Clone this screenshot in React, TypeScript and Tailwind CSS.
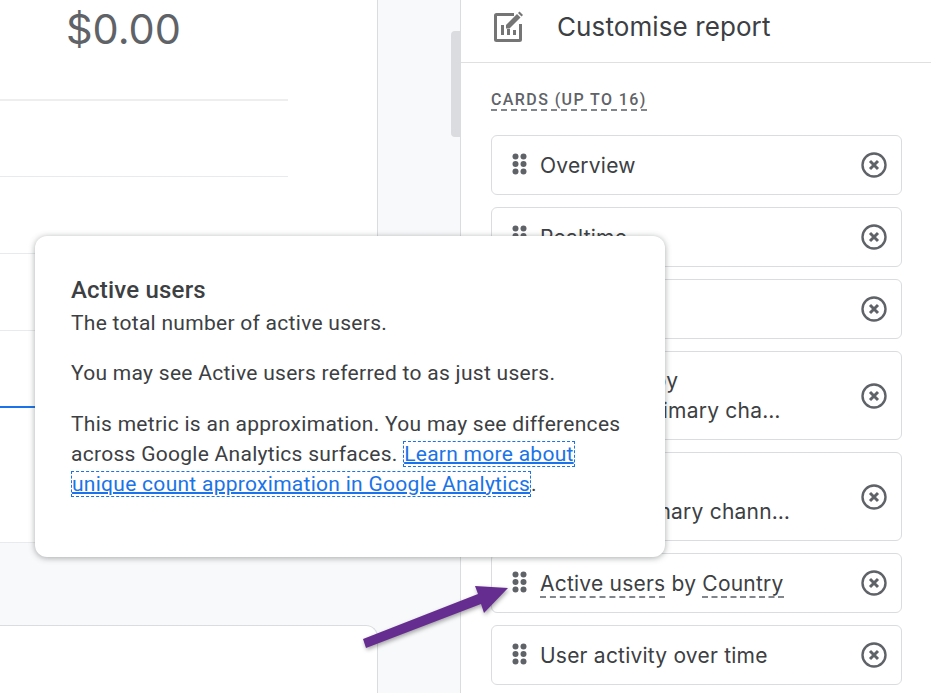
const cards = [
  { lines: ["Overview"] },
  { lines: ["Realtime"] },
  { lines: ["Insights"] },
  { lines: ["New users by", "First user primary cha…"], tall: true },
  { lines: ["Sessions by", "Session primary chann…"], tall: true },
  { lines: [], country: true },
  { lines: ["User activity over time"] },
];

function DragDots() {
  return (
    <svg width="16" height="22" viewBox="0 0 16 22" className="shrink-0 fill-[#5f6368]">
      <circle cx="3.5" cy="3.500" r="3" />
      <circle cx="11.5" cy="3.500" r="3" />
      <circle cx="3.5" cy="11" r="3" />
      <circle cx="11.5" cy="11" r="3" />
      <circle cx="3.5" cy="18.5" r="3" />
      <circle cx="11.5" cy="18.5" r="3" />
    </svg>
  );
}

function RemoveIcon() {
  return (
    <svg width="26" height="26" viewBox="0 0 26 26" fill="none" className="shrink-0 stroke-[#5f6368]">
      <circle cx="13" cy="13" r="11.5" strokeWidth="2.4" />
      <path d="M9 9l8 8M17 9l-8 8" strokeWidth="3" />
    </svg>
  );
}

function EditChartIcon() {
  return (
    <svg width="32" height="32" viewBox="0 0 32 32" fill="none" className="shrink-0">
      <path d="M21 3.5H3.5a1 1 0 0 0-1 1v24a1 1 0 0 0 1 1h23a1 1 0 0 0 1-1V13" stroke="#757575" strokeWidth="3" />
      <path d="M13 14l11-11 3.5 3.5-11 11H13z" fill="#757575" />
      <path d="M25 2l1.5-1.5 3.5 3.5L28.5 5.500z" fill="#757575" />
      <path d="M8 14h3v10H8zM14 18h3v6h-3zM20 19h3v5h-3z" fill="#757575" />
    </svg>
  );
}

function CardRow({ card }: { card: (typeof cards)[number] }) {
  const textClass = "pt-[1px] font-['Inter',sans-serif] text-[21px] leading-[30px] tracking-[0.22px] text-[#3c4043]";
  return (
    <div
      className={`flex items-center justify-between rounded-md border border-[#dadce0] bg-white pl-[20px] pr-[14px] ${
        card.tall ? "h-[89px]" : "h-[60px]"
      }`}
    >
      <div className="flex items-center gap-[12px]">
        <div className="-mt-[2px]">
          <DragDots />
        </div>
        {card.country ? (
          <div className={textClass}>
            <span className="border-b-2 border-dashed border-[#80868b]">Active users</span> by{" "}
            <span className="border-b-2 border-dashed border-[#80868b]">Country</span>
          </div>
        ) : (
          <div className={textClass}>
            {card.lines.map((line) => (
              <div key={line}>{line}</div>
            ))}
          </div>
        )}
      </div>
      <RemoveIcon />
    </div>
  );
}

export default function App() {
  return (
    <div className="relative flex h-[693px] w-[931px] overflow-hidden bg-white font-['Roboto',sans-serif]">
      {/* report column */}
      <div className="flex w-[378px] shrink-0 flex-col bg-white">
        <div className="border-r border-[#dadce0]">
          <div className="flex h-[101px] w-[288px] justify-end border-b-2 border-[#eeeeee] pr-[107px] pt-[5px]">
            <span className="font-['Inter',sans-serif] text-[41.5px] leading-[48px] text-[#5f6368]">$0.00</span>
          </div>
          <div className="h-[76px] w-[288px] border-b border-[#e8eaed]" />
          <div className="h-[77px] w-[288px] border-b border-[#e8eaed]" />
          <div className="h-[77px] w-[288px] border-b border-[#e8eaed]" />
          <div className="h-[77px] w-[288px] border-b-2 border-[#1a73e8]" />
          <div className="h-[135px] border-b border-[#e8eaed]" />
        </div>
        <div className="h-[82px] bg-[#f8f9fa]" />
        <div className="flex-1 bg-[#f8f9fa]">
          <div className="h-full rounded-tr-xl border-t border-r border-[#dadce0] bg-white" />
        </div>
      </div>

      {/* gutter with scrollbar */}
      <div className="w-[83px] shrink-0 border-r border-[#dadce0] bg-[#f8f9fa] pl-[73px] pt-[31px]">
        <div className="h-[106px] w-[9px] rounded-l bg-[#dadce0]" />
      </div>

      {/* customise panel */}
      <div className="flex-1">
        <div className="flex h-[63px] items-center gap-[32px] border-b border-[#e0e0e0] pb-[9px] pl-[32px]">
          <EditChartIcon />
          <h1 className="font-['Inter',sans-serif] text-[26px] font-normal tracking-[0.1px] text-[#3c4043]">Customise report</h1>
        </div>
        <div className="px-[30px] pt-[25px]">
          <span className="border-b-2 border-dashed border-[#80868b] text-[16px] font-medium leading-[20px] tracking-[1.4px] text-[#5f6368]">
            CARDS (UP TO 16)
          </span>
          <div className="mt-[23px] flex w-[411px] flex-col gap-[12px]">
            {cards.map((card, i) => (
              <CardRow key={i} card={card} />
            ))}
          </div>
        </div>
      </div>

      {/* metric tooltip */}
      <div className="absolute left-[35px] top-[236px] z-10 h-[321px] w-[630px] rounded-xl bg-white px-[36px] pt-[37px] text-[21px] leading-[30px] tracking-[0.28px] text-[#3c4043] shadow-[0_1px_6px_rgba(60,64,67,0.45)]">
        <h2 className="text-[24px] font-medium leading-[35px] tracking-[0.2px]">Active users</h2>
        <p className="mb-[20px]">The total number of active users.</p>
        <p className="mb-[21px]">You may see Active users referred to as just users.</p>
        <p>
          This metric is an approximation. You may see differences across Google Analytics surfaces.{" "}
          <a
            href="#"
            className="border border-dashed border-[#1a73e8] text-[#1a73e8] underline decoration-2 [box-decoration-break:clone]"
          >
            Learn more about unique count approximation in Google Analytics
          </a>
          .
        </p>
      </div>

      {/* annotation arrow */}
      <svg
        width="170"
        height="80"
        viewBox="0 0 170 80"
        className="absolute left-[350px] top-[580px] z-20 drop-shadow-[1px_2px_2px_rgba(0,0,0,0.35)]"
      >
        <path d="M13 59L128 14 125 6 158 8 134 33 131 24 16 68z" fill="#662d91" />
      </svg>
    </div>
  );
}
